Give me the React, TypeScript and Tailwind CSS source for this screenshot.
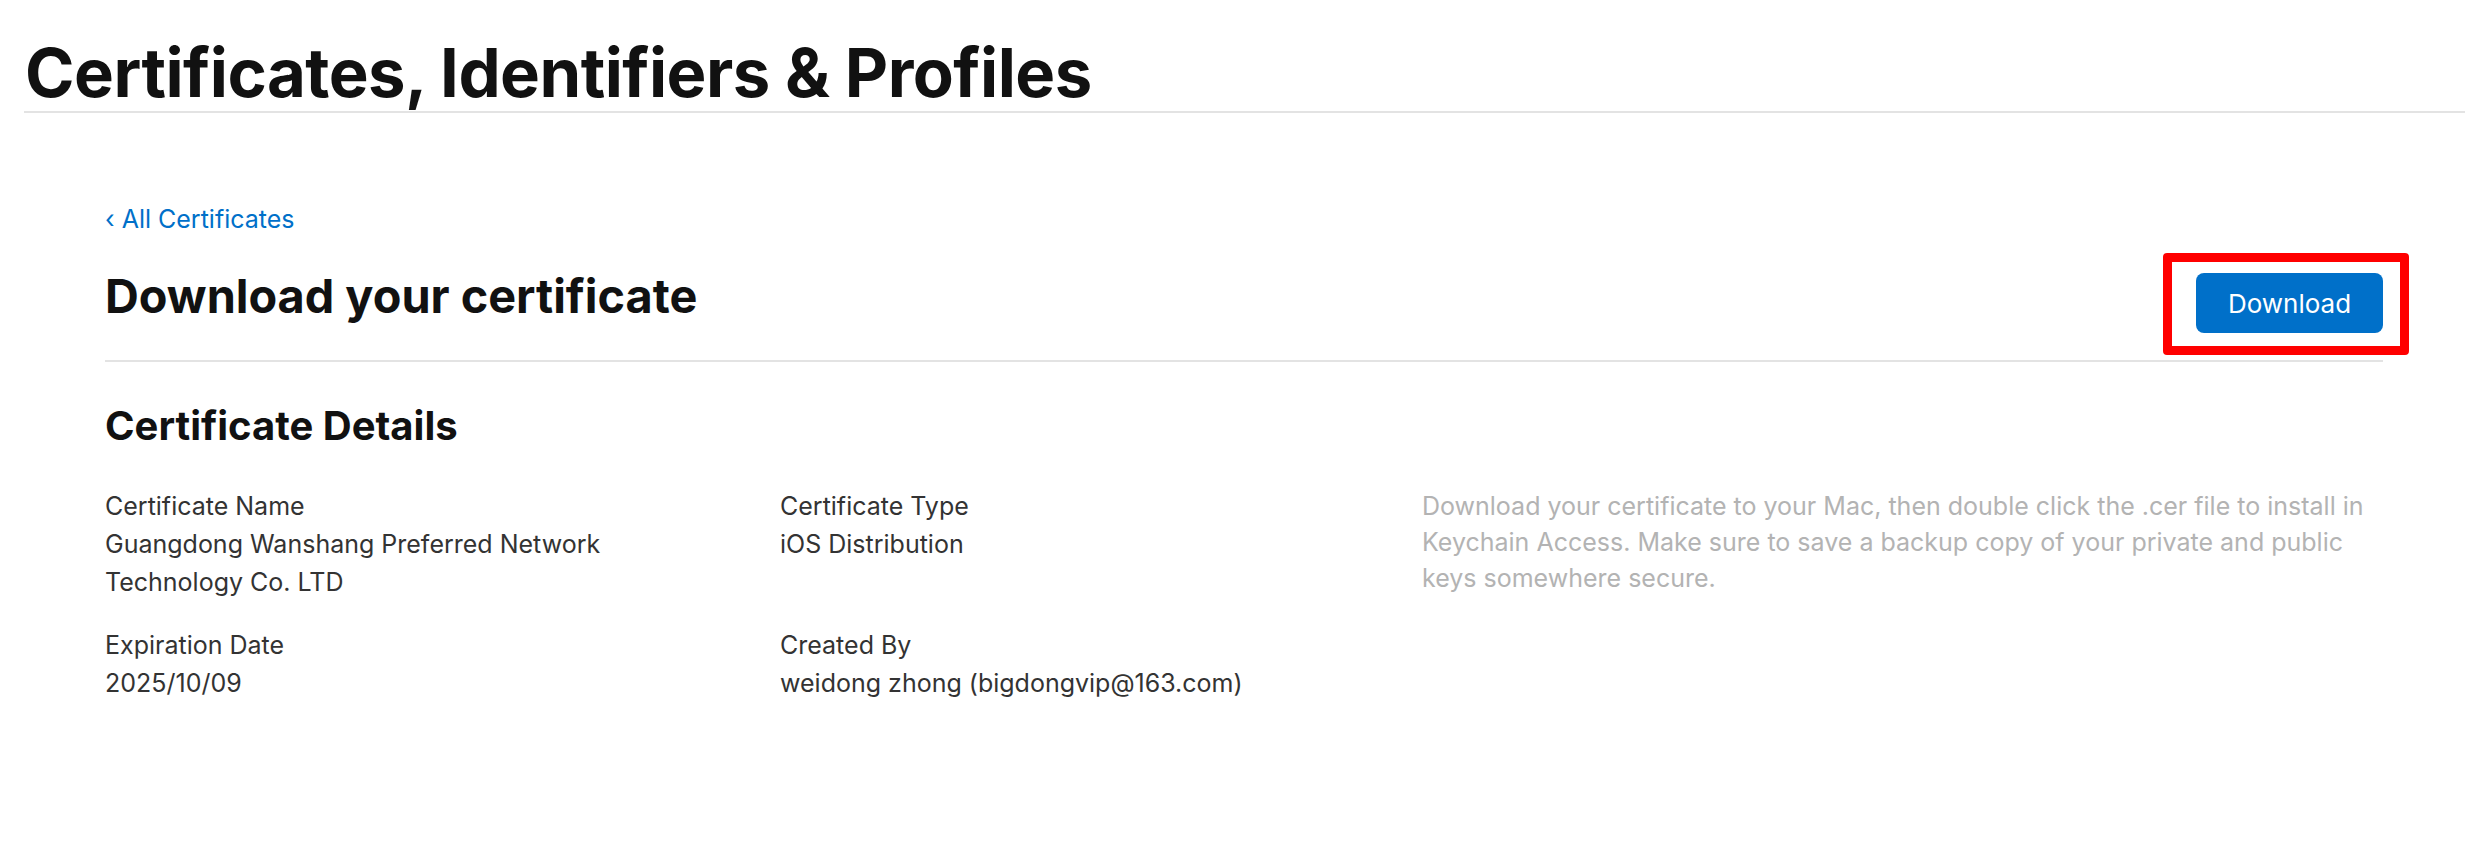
import React from 'react';

const details = [
  { label: 'Certificate Name', value: 'Guangdong Wanshang Preferred Network Technology Co. LTD' },
  { label: 'Certificate Type', value: 'iOS Distribution' },
  { label: 'Expiration Date', value: '2025/10/09' },
  { label: 'Created By', value: 'weidong zhong (bigdongvip@163.com)' },
];

export default function App() {
  return (
    <div className="min-h-screen bg-white font-['Inter','Liberation_Sans',sans-serif] text-[#111]">
      {/* Page title */}
      <header className="ml-[24px] mr-[27px] border-b-2 border-[#e3e3e3]">
        <h1 className="pl-[1px] pt-[36px] pb-[1px] text-[67px] leading-[74px] font-bold tracking-[-0.008em]">
          Certificates, Identifiers &amp; Profiles
        </h1>
      </header>

      <main className="pl-[105px] pr-[109px]">
        <a href="#" className="mt-[90px] block text-[25px] leading-[32px] text-[#0070c9]">
          ‹ All Certificates
        </a>

        <div className="mt-[33px] flex items-start justify-between border-b-2 border-[#e3e3e3] pb-[27px]">
          <h2 className="text-[46.8px] leading-[56px] font-bold">Download your certificate</h2>
          <div className="relative mt-[5px]">
            <button className="h-[60px] w-[187px] rounded-[8px] bg-[#0070c9] text-[26px] text-white">
              Download
            </button>
            {/* highlight annotation */}
            <div className="pointer-events-none absolute -left-[33px] -right-[26px] -top-[20px] -bottom-[22px] rounded-[4px] border-[9px] border-[#ff0000]" />
          </div>
        </div>

        <h3 className="mt-[40px] text-[40px] leading-[48px] font-bold">Certificate Details</h3>

        <div className="mt-[37px] flex text-[25px] text-[#333]">
          <div className="grid grid-cols-[675px_642px] gap-y-[25px] leading-[38px]">
            {details.map((d) => (
              <div key={d.label} className="pr-[70px]">
                <div>{d.label}</div>
                <div>{d.value}</div>
              </div>
            ))}
          </div>
          <p className="mt-[1px] flex-1 leading-[36px] text-[#b3b3b3]">
            Download your certificate to your Mac, then double click the .cer file to install in Keychain Access. Make
            sure to save a backup copy of your private and public keys somewhere secure.
          </p>
        </div>
      </main>
    </div>
  );
}
